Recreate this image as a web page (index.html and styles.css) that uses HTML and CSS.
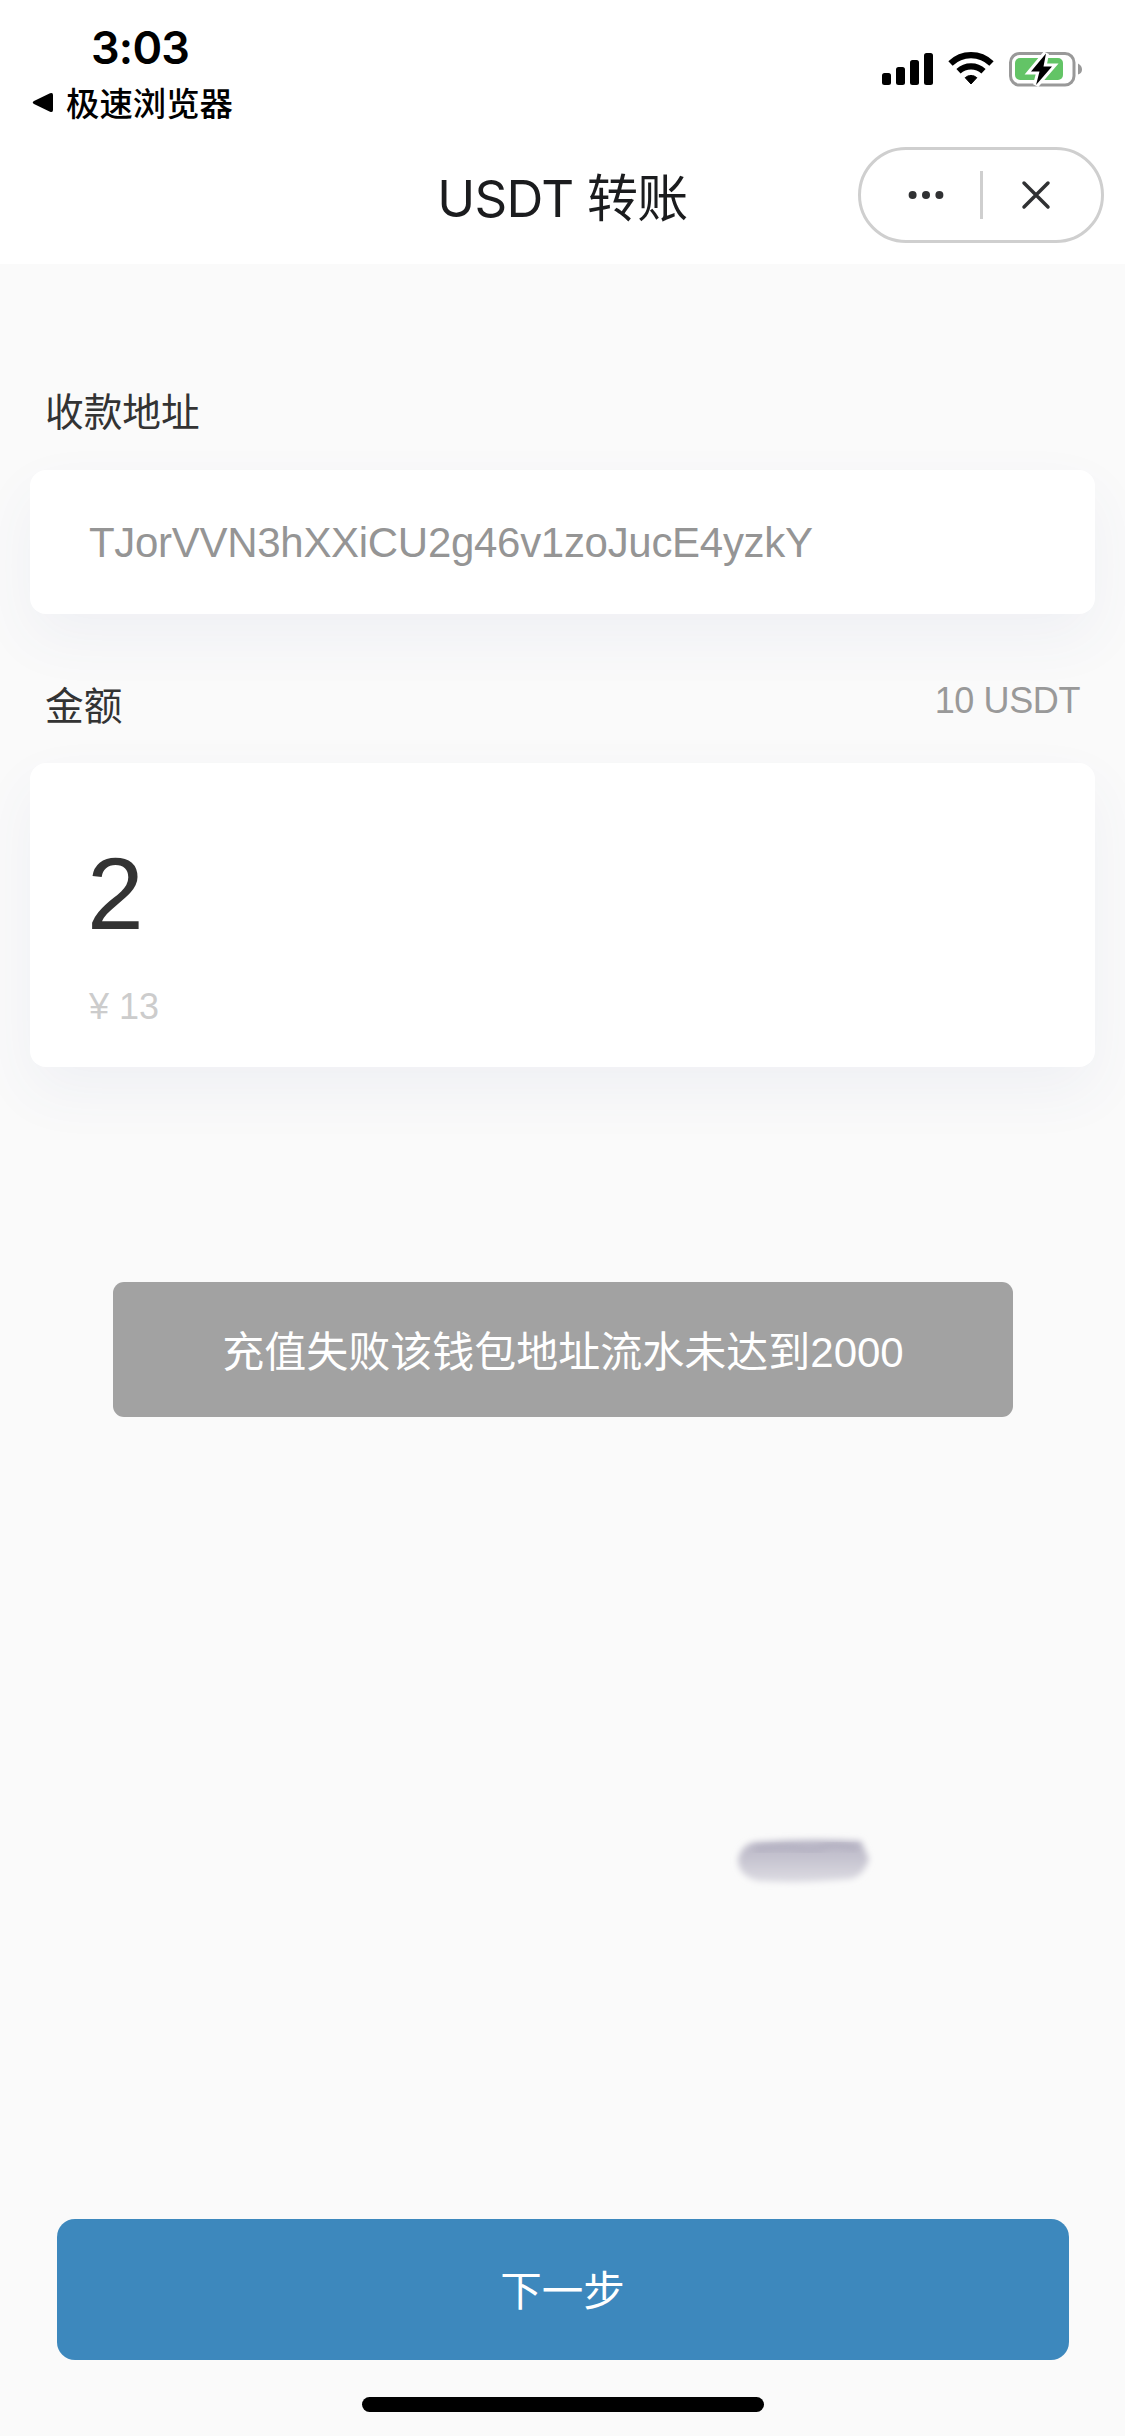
FILE: index.html
```html
<!DOCTYPE html>
<html lang="zh-CN">
<head>
<meta charset="utf-8">
<title>USDT 转账</title>
<link rel="stylesheet" href="styles.css">
</head>
<body>
<div class="screen">
  <header class="header">
    <div class="status">
      <div class="status-left">
        <div class="time">3:03</div>
        <div class="back">
          <svg class="back-arrow" width="22" height="21" viewBox="0 0 22 21"><path d="M2 9 18 1.300Q21 0 21 3V18Q21 21 18 19.700L2 12Q-.5 10.500 2 9Z"/></svg>
          <span>极速浏览器</span>
        </div>
      </div>
      <svg class="status-icons" width="202" height="36" viewBox="0 0 202 36">
        <g>
          <rect x="2" y="21" width="9" height="12" rx="2.500"/>
          <rect x="16" y="15" width="9" height="18" rx="2.500"/>
          <rect x="30" y="8" width="9" height="25" rx="2.500"/>
          <rect x="44" y="1" width="9" height="32" rx="2.500"/>
        </g>
        <g fill="none" stroke="#000" stroke-width="6.200">
          <path d="M70.500 11.500C82 .3 100 .3 111.500 11.500"/>
          <path d="M78.500 19.200C85.500 12.800 96.500 12.800 103.500 19.200"/>
        </g>
        <path d="M85.200 25.700C88.500 22.700 93.500 22.700 96.800 25.700L91 32Z" stroke="#000" stroke-linejoin="round"/>
        <rect x="130.500" y="1.500" width="63.500" height="31.500" rx="9" fill="none" stroke="#999" stroke-width="3"/>
        <rect x="135" y="6" width="48" height="22" rx="5" fill="#63c466"/>
        <path d="M198 11.500Q202 13.500 202 17.500T198 22.500Z" fill="#999"/>
        <path d="M166 1.500 151 19.500H159.500L156 33 172 14.500H163.500Z" fill="#fff" stroke="#fff" stroke-width="6"/>
        <path d="M166 1.500 151 19.500H159.500L156 33 172 14.500H163.500Z"/>
      </svg>
    </div>
    <div class="navbar">
      <h1 class="title">USDT 转账</h1>
      <div class="capsule">
        <svg width="36" height="10" viewBox="0 0 36 10" fill="#303133"><circle cx="4.600" cy="5" r="4"/><circle cx="18" cy="5" r="4"/><circle cx="31.400" cy="5" r="4"/></svg>
        <i class="divider"></i>
        <svg width="28" height="28" viewBox="0 0 28 28" stroke="#303133" stroke-width="3.500" stroke-linecap="round"><path d="M2 2 26 26M26 2 2 26"/></svg>
      </div>
    </div>
  </header>
  <main class="form">
    <div class="row address-row"><span class="label">收款地址</span></div>
    <div class="card address-card"><span class="address">TJorVVN3hXXiCU2g46v1zoJucE4yzkY</span></div>
    <div class="row amount-row"><span class="label">金额</span><span class="balance">10 USDT</span></div>
    <div class="card amount-card">
      <div class="amount">2</div>
      <div class="fiat">¥ 13</div>
    </div>
  </main>
  <footer class="footer">
    <button class="next">下一步</button>
    <div class="home-bar"></div>
  </footer>
  <div class="toast">充值失败该钱包地址流水未达到2000</div>
  <svg class="smudge" width="190" height="100" viewBox="0 0 190 100">
    <defs>
      <linearGradient id="ink" x1="0" y1="0" x2="0" y2="1"><stop offset="0" stop-color="#b8b5c5"/><stop offset=".45" stop-color="#c6c4d0"/><stop offset="1" stop-color="#dddce3"/></linearGradient>
      <filter id="soft" x="-10%" y="-40%" width="120%" height="180%"><feGaussianBlur stdDeviation="3"/></filter>
    </defs>
    <path d="M46 32Q100 28 151 31L159 49Q153 67 140 69Q90 74 48 71Q28 66 28 49Q32 34 46 32Z" fill="url(#ink)" filter="url(#soft)"/>
    <path d="M45 40Q70 36 88 39T114 37T147 38" fill="none" stroke="#aaa7ba" stroke-width="7" opacity=".45" filter="url(#soft)"/>
  </svg>
</div>
</body>
</html>
```
FILE: styles.css
```css
* { box-sizing: border-box; }
body { margin: 0; }
svg { display: block; flex: none; overflow: visible; }

.screen {
  position: relative;
  display: flex;
  flex-direction: column;
  width: 1125px;
  height: 2436px;
  overflow: hidden;
  background: #fafafa;
  color: #333;
  font-family: "Liberation Sans", "Noto Sans CJK SC", sans-serif;
}

.header { height: 264px; background: #fff; }
.status {
  display: flex;
  justify-content: space-between;
  height: 132px;
  padding: 20px 43px 0 32px;
  color: #000;
}
.time {
  height: 56px;
  padding-left: 59px;
  font: 600 45px/56px Inter, sans-serif;
  letter-spacing: -.8px;
}
.back {
  display: flex;
  align-items: center;
  gap: 12px;
  height: 52px;
  font: 500 33.400px/52px "Noto Sans CJK SC", sans-serif;
}
.status-icons { margin-top: 32px; }

.navbar {
  display: grid;
  grid-template-columns: 1fr auto 1fr;
  align-items: center;
  height: 132px;
  padding: 0 21px 6px;
}
.title {
  grid-column: 2;
  margin: 8px 0 0;
  color: #1b1c1e;
  font: 400 51px/72px Inter, "Noto Sans CJK SC", sans-serif;
  letter-spacing: -.7px;
}
.capsule {
  display: flex;
  justify-self: end;
  align-items: center;
  width: 246px;
  height: 96px;
  margin-top: -1px;
  padding-left: 47px;
  border: 3px solid #cfcfcf;
  border-radius: 48px;
}
.divider { width: 3px; height: 48px; margin: 0 39px 0 36px; background: #cfcfcf; }

.form { flex: 1; padding: 0 30px; }
.row {
  display: flex;
  justify-content: space-between;
  padding: 0 15px 0 15px;
}
.address-row { height: 206px; padding-top: 120px; }
.amount-row { height: 149px; padding-top: 62px; }
.label { font-size: 38.700px; line-height: 58px; }
.amount-row .label { padding-top: 2px; }
.balance { color: #999; font-size: 36px; line-height: 50px; letter-spacing: -.4px; }
.card {
  padding: 0 59px;
  border-radius: 16px;
  background: #fff;
  box-shadow: 0 24px 60px rgba(60, 80, 150, .06);
}
.address-card { display: flex; align-items: center; height: 144px; padding-top: 2px; }
.address { color: #959595; font-size: 42px; line-height: 60px; letter-spacing: -.3px; }
.amount-card { height: 304px; padding-top: 71px; }
.amount { margin-left: -2px; font-size: 102px; line-height: 120px; }
.fiat { margin-top: 29px; color: #ccc; font-size: 36px; line-height: 48px; }

.footer {
  display: flex;
  flex-direction: column;
  align-items: center;
  height: 217px;
}
.next {
  width: 1012px;
  height: 141px;
  padding: 0 0 3px;
  border: 0;
  border-radius: 18px;
  background: #3d88bd;
  color: #fff;
  font: 400 41.500px/138px "Noto Sans CJK SC", sans-serif;
}
.home-bar {
  width: 402px;
  height: 15px;
  margin-top: 37px;
  border-radius: 8px;
  background: #000;
}

.toast {
  position: absolute;
  left: 113px;
  top: 1282px;
  width: 900px;
  height: 135px;
  padding-top: 3px;
  border-radius: 11px;
  background: #a2a2a2;
  color: #fff;
  font-size: 42px;
  line-height: 135px;
  text-align: center;
}
.smudge { position: absolute; left: 710px; top: 1810px; }
```
